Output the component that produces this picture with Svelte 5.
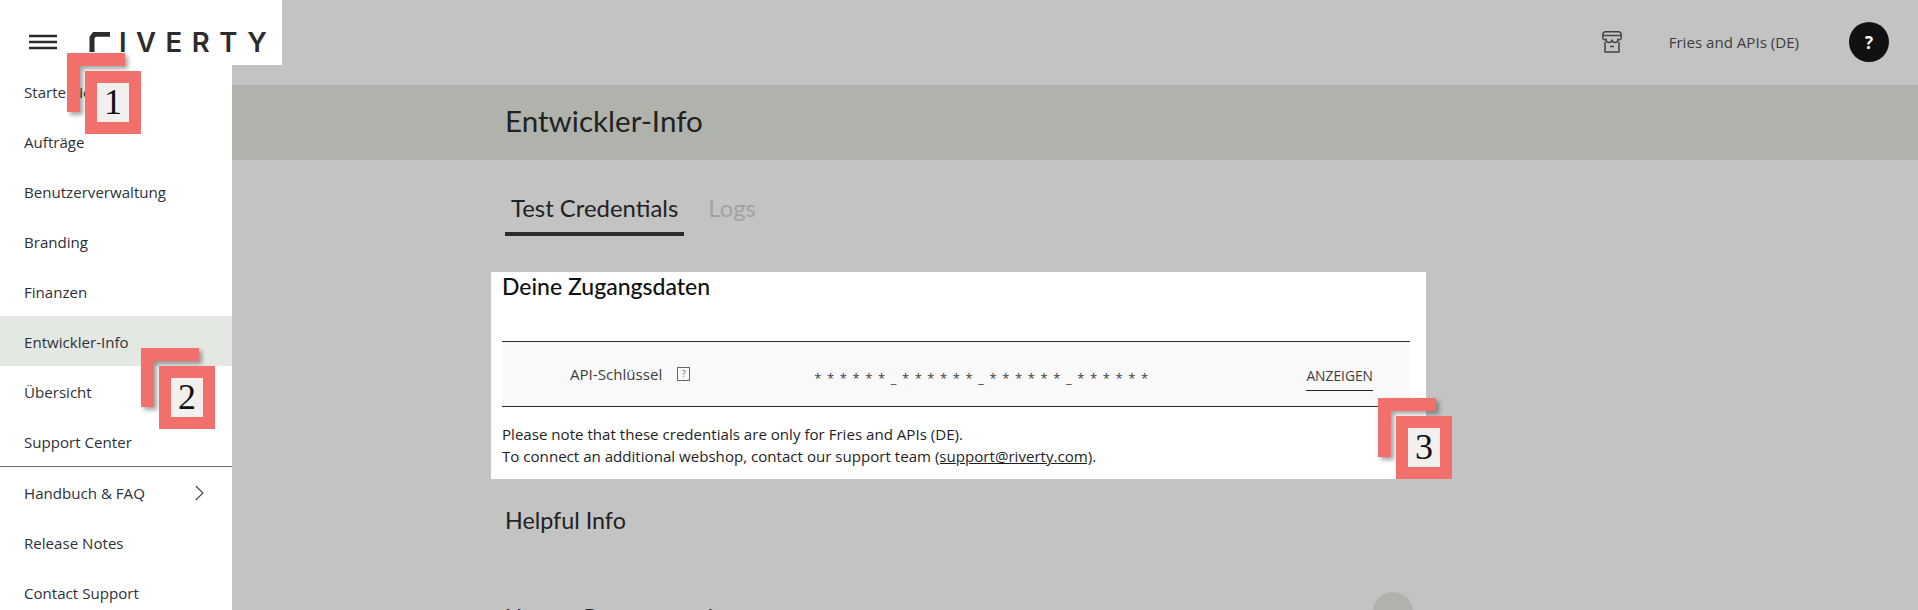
<script>
  const nav1 = ['Starte hier', 'Aufträge', 'Benutzerverwaltung', 'Branding', 'Finanzen', 'Entwickler-Info', 'Übersicht', 'Support Center'];
  const nav2 = ['Handbuch & FAQ', 'Release Notes', 'Contact Support'];
</script>

<div class="page">
  <aside class="side">
    <div class="brand">
      <svg class="burger" width="28" height="16" viewBox="0 0 28 16"><path d="M0 2h28M0 8h28M0 14h28" stroke="#2c2c2c" stroke-width="2.300" fill="none"/></svg>
      <span class="logo">
        <svg width="21" height="20" viewBox="0 0 21 20"><path d="M3 20V5.500L5.500 2.200H21" stroke="#2c2c2c" stroke-width="5" fill="none"/></svg>
        <span class="logotext">IVERTY</span>
      </span>
    </div>
    <nav>
      {#each nav1 as item}
        <div class="item" class:active={item === 'Entwickler-Info'}>{item}</div>
      {/each}
      <div class="sep"></div>
      {#each nav2 as item}
        <div class="item">
          {item}
          {#if item.startsWith('Handbuch')}
            <svg class="chev" width="9" height="16" viewBox="0 0 9 16"><path d="M.8 1 8 8 .8 15" stroke="#444" stroke-width="1.100" fill="none"/></svg>
          {/if}
        </div>
      {/each}
    </nav>
  </aside>

  <main class="main">
    <header class="top">
      <svg class="store" width="20" height="22" viewBox="0 0 20 22"><path d="M3.500 .8h13a2.700 2.700 0 0 1 2.700 2.700v3.500a2 2 0 0 1-3.200 1.400 3 3 0 0 1-6 0 3 3 0 0 1-6 0A2 2 0 0 1 .8 7V3.500A2.700 2.700 0 0 1 3.500 .8ZM1 4.500h18M3 11v10h14V11M8 15.500h4" stroke="#444" stroke-width="1.500" fill="none"/></svg>
      <span class="shop">Fries and APIs (DE)</span>
      <span class="help">?</span>
    </header>
    <div class="titlebar"><h1>Entwickler-Info</h1></div>
    <div class="content">
      <div class="tabs">
        <span class="tab on">Test Credentials</span>
        <span class="tab">Logs</span>
      </div>
      <section class="card">
        <h2>Deine Zugangsdaten</h2>
        <div class="row">
          <span class="label">API-Schlüssel</span>
          <span class="q">?</span>
          <span class="key">* * * * * * _ * * * * * * _ * * * * * * _ * * * * * *</span>
          <span class="show">ANZEIGEN</span>
        </div>
        <p>Please note that these credentials are only for Fries and APIs (DE).<br>To connect an additional webshop, contact our support team <a href="#support">(support@riverty.com)</a>.</p>
      </section>
      <h3>Helpful Info</h3>
      <div class="more">
        <h3 class="cut">Unsere Partnerangebote</h3>
        <span class="circle"></span>
      </div>
    </div>
  </main>

  <div class="call c1"><i></i><b>1</b></div>
  <div class="call c2"><i></i><b>2</b></div>
  <div class="call c3"><i></i><b>3</b></div>
</div>

<style>
  :global(body) { margin: 0; overflow: hidden; }
  .page { position: relative; display: flex; width: 1918px; height: 610px; overflow: hidden; background: #c3c3c3; font-family: "Open Sans", "Noto Sans", sans-serif; color: #222; }
  .side { width: 232px; flex: none; background: #fff; position: relative; z-index: 1; }
  .brand { width: 282px; height: 65px; background: #fff; display: flex; align-items: flex-start; box-sizing: border-box; padding-left: 29px; }
  .burger { margin-top: 34px; }
  .logo { display: flex; margin: 32px 0 0 32px; }
  .logotext { font-family: "Inter", sans-serif; font-weight: 600; font-size: 27.500px; letter-spacing: 9.500px; color: #2c2c2c; margin-left: 9px; line-height: 20px; white-space: nowrap; }
  nav { padding-top: 1px; }
  .item { height: 50px; display: flex; align-items: center; justify-content: space-between; padding: 2px 28px 0 24px; box-sizing: border-box; font-size: 15.100px; color: #2c3138; }
  .item.active { background: #e4e8e2; }
  .sep { height: 1px; background: #6b6b6b; }
  .main { flex: 1; min-width: 0; }
  .top { height: 85px; display: flex; align-items: center; justify-content: flex-end; padding: 0 29px 1px 0; box-sizing: border-box; }
  .store { margin-right: 47px; }
  .shop { font-size: 15.100px; color: #3c3c3c; margin-right: 50px; }
  .help { width: 40px; height: 40px; border-radius: 50%; background: #111; color: #fff; font-weight: 700; font-size: 17px; display: flex; align-items: center; justify-content: center; }
  .titlebar { height: 75px; background: #afb3ac; display: flex; align-items: center; padding: 0 0 4px 273px; box-sizing: border-box; }
  h1, h2, h3, .tab { font-family: "Lato", "Noto Sans", sans-serif; font-weight: 400; margin: 0; }
  h1 { font-size: 29.600px; color: #222; }
  .content { padding-left: 273px; }
  .tabs { display: flex; gap: 18px; height: 76px; box-sizing: border-box; align-items: flex-end; }
  .tab { font-size: 23.900px; color: #a2a2a2; padding: 0 6px 15px; height: 42px; box-sizing: border-box; line-height: 27px; }
  .tab.on { color: #222; border-bottom: 4px solid #2c2c2c; padding-bottom: 11px; }
  .card { width: 935px; height: 207px; margin: 36px 0 0 -14px; background: #fff; padding: 0 16px 0 11px; box-sizing: border-box; }
  h2 { font-size: 23px; font-weight: 500; line-height: 28px; color: #111; height: 69px; box-sizing: border-box; }
  .row { height: 66px; border-top: 1px solid #2c2c2c; border-bottom: 1px solid #2c2c2c; background: #f9f9f9; box-sizing: border-box; display: flex; align-items: center; font-size: 15.100px; color: #3c3c3c; }
  .label { margin-left: 68px; }
  .q { width: 11px; height: 12px; border: 1px solid #666; font-size: 9px; line-height: 12px; text-align: center; margin-left: 15px; color: #666; }
  .key { flex: 1; padding: 8px 0 0 124px; font-size: 13px; letter-spacing: 1.100px; white-space: nowrap; }
  .show { font-size: 13.800px; line-height: 18px; margin-top: 10px; padding-bottom: 5px; border-bottom: 1px solid #222; margin-right: 37px; }
  p { margin: 16px 0 0; font-size: 15.100px; line-height: 22px; color: #1e1e1e; }
  a { color: #1e1e1e; }
  h3 { font-size: 23.300px; color: #222; margin-top: 27px; }
  .more { display: flex; justify-content: space-between; width: 908px; margin-top: 69px; position: relative; }
  .cut { margin-top: 0; line-height: 29px; }
  .circle { width: 40px; height: 40px; border-radius: 50%; background: #afb3ac; margin-top: -11px; }
  .call { position: absolute; z-index: 3; width: 75px; height: 81px; }
  .call i { position: absolute; left: 0; top: 0; width: 58px; height: 59px; box-sizing: border-box; border-left: 13px solid #f1706b; border-top: 13px solid #f1706b; filter: drop-shadow(3px 3px 2px rgba(0,0,0,.35)); }
  .call b { position: absolute; left: 18px; top: 18px; width: 32px; height: 39px; border: 12px solid #f1706b; background: #f1f0ef; font: 400 36px/39px "Liberation Serif", serif; color: #111; text-align: center; }
  .c1 { left: 67px; top: 53px; }
  .c2 { left: 141px; top: 348px; }
  .c3 { left: 1378px; top: 398px; }
</style>
